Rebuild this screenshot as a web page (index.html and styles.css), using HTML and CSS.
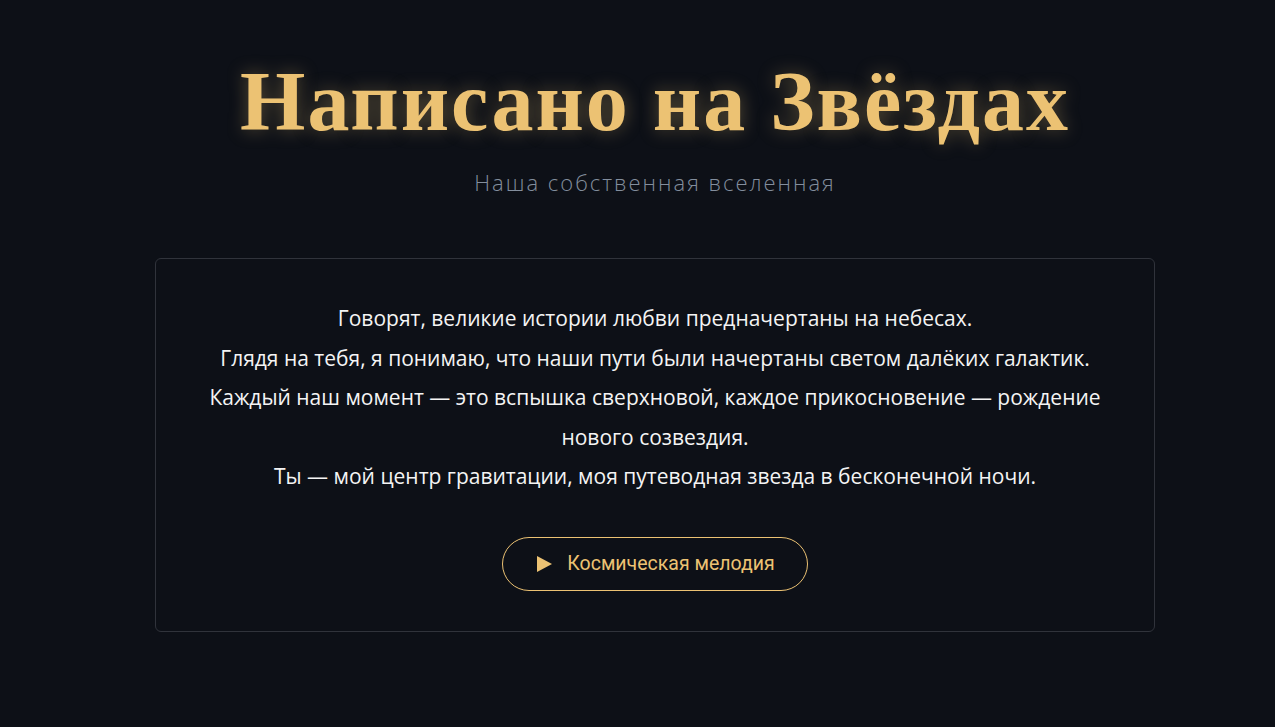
FILE: index.html
```html
<!DOCTYPE html>
<html lang="ru">
<head>
<meta charset="utf-8">
<title>Написано на Звёздах</title>
<link rel="stylesheet" href="styles.css">
</head>
<body>
<main class="page">
  <header class="hero">
    <h1 class="title">Написано на Звёздах</h1>
    <p class="subtitle">Наша собственная вселенная</p>
  </header>
  <section class="card">
    <div class="letter">
      <p>Говорят, великие истории любви предначертаны на небесах.</p>
      <p>Глядя на тебя, я понимаю, что наши пути были начертаны светом далёких галактик.</p>
      <p>Каждый наш момент — это вспышка сверхновой, каждое прикосновение — рождение нового созвездия.</p>
      <p>Ты — мой центр гравитации, моя путеводная звезда в бесконечной ночи.</p>
    </div>
    <button class="music-btn" type="button">
      <svg class="play" width="15" height="16" viewBox="0 0 15 16"><path d="M0 0 L15 8 L0 16 Z" fill="#ecc273"/></svg>
      <span>Космическая мелодия</span>
    </button>
  </section>
</main>
</body>
</html>
```
FILE: styles.css
```css
* { box-sizing: border-box; }
html, body { margin: 0; padding: 0; }
body {
  background: #0d1017;
  color: #f2f2f2;
  font-family: "Open Sans", "Noto Sans", sans-serif;
  min-height: 727px;
}
.page {
  display: flex;
  flex-direction: column;
  align-items: center;
  padding-top: 52px;
  padding-left: 35px;
}
.hero {
  display: flex;
  flex-direction: column;
  align-items: center;
}
.title {
  margin: 0;
  font-family: "Liberation Serif", "DejaVu Serif", serif;
  font-weight: 700;
  font-size: 84px;
  line-height: 100px;
  color: #ecc273;
  letter-spacing: 2px;
  text-shadow: 0 0 18px rgba(236, 194, 115, 0.35);
}
.subtitle {
  margin: 15px 0 0;
  font-size: 22px;
  font-weight: 300;
  color: #838e9d;
  letter-spacing: 2px;
  line-height: 30px;
}
.card {
  margin-top: 61px;
  width: 1000px;
  border: 1px solid #30333b;
  border-radius: 6px;
  padding: 40px 40px 40px;
  display: flex;
  flex-direction: column;
  align-items: center;
}
.letter {
  text-align: center;
  font-size: 21px;
  line-height: 39.5px;
  color: #f4f4f4;
}
.letter p { margin: 0; }
.music-btn {
  margin-top: 40px;
  display: flex;
  align-items: center;
  gap: 15px;
  height: 54px;
  padding: 0 32px 0 34px;
  border: 1px solid #ecc273;
  border-radius: 27px;
  background: transparent;
  color: #ecc273;
  font-family: "Roboto", "Liberation Sans", sans-serif;
  font-size: 19.5px;
  cursor: pointer;
}
.play { display: block; }
```
